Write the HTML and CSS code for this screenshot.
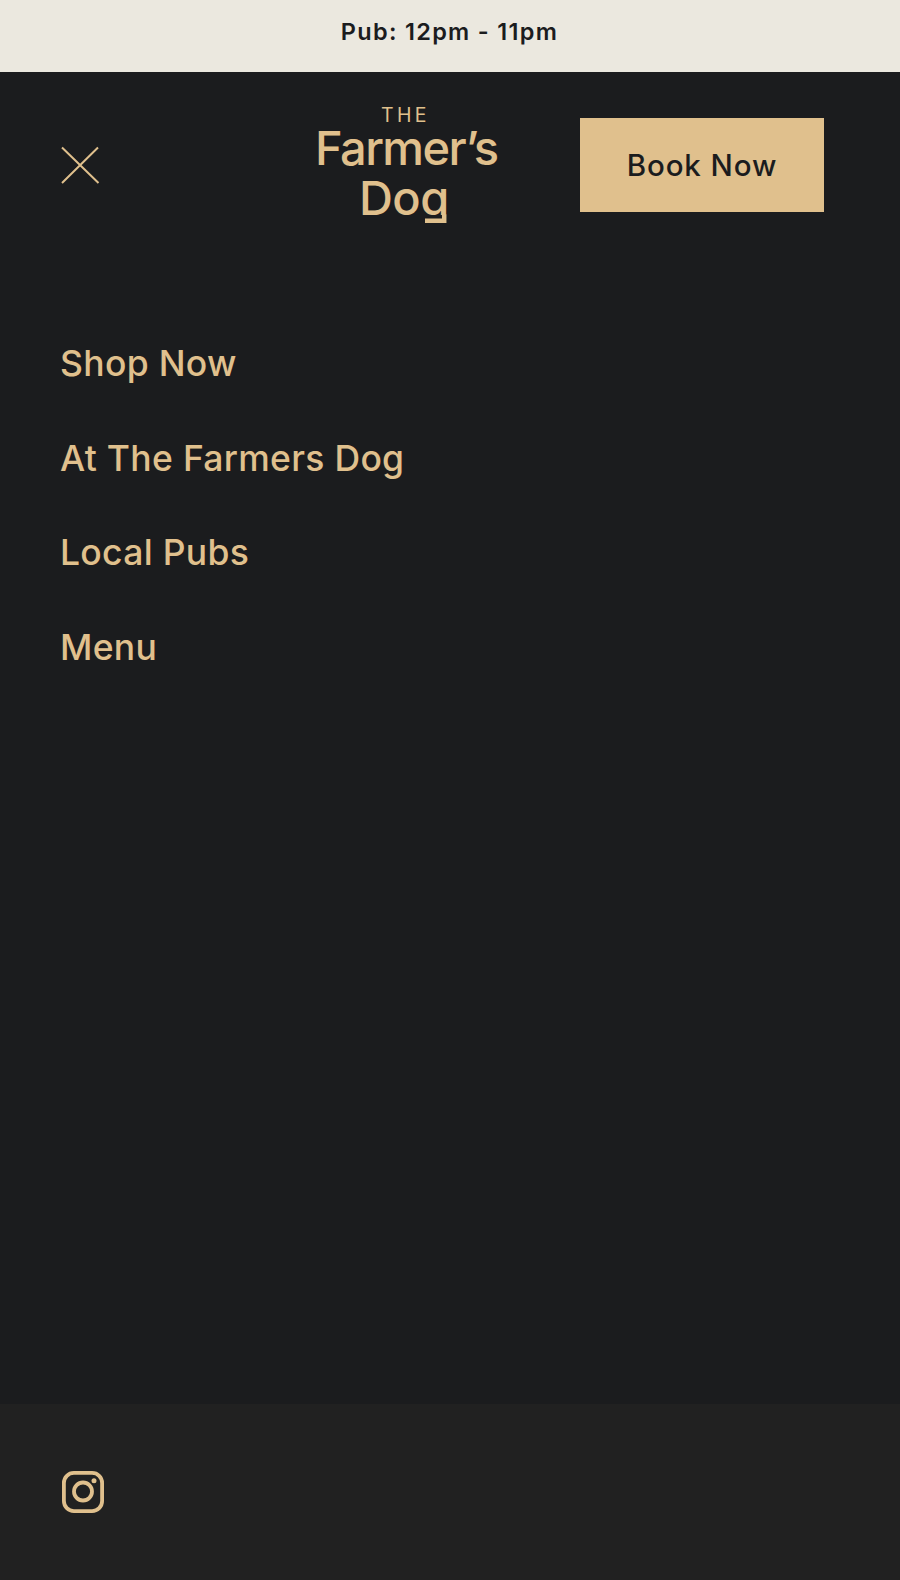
FILE: index.html
```html
<!DOCTYPE html>
<html lang="en">
<head>
    <meta charset="UTF-8">
    <meta name="viewport" content="width=device-width, initial-scale=1.0">
    <title>The Farmer's Dog</title>
    <link rel="stylesheet" href="styles.css">
</head>
<body>
    <div class="opening-hours">Pub: 12pm - 11pm</div>

    <header class="site-header">
        <button class="menu-close" aria-label="Close menu">
            <svg width="40" height="40" viewBox="0 0 40 40">
                <path d="M2 2.500L38.500 38M38 2.500L2 38" fill="none" stroke="currentColor" stroke-width="2"/>
            </svg>
        </button>
        <a class="logo" href="#" aria-label="The Farmer's Dog">
            <svg width="190" height="132" viewBox="0 0 190 132">
                <clipPath id="dog-clip">
                    <rect x="0" y="70" width="190" height="46"/>
                </clipPath>
                <text class="logo-small" x="64" y="22.500" textLength="45.500">THE</text>
                <text class="logo-large" x="-2" y="65.500" textLength="184">Farmer’s</text>
                <text class="logo-large" x="42" y="115.500" textLength="90.300" clip-path="url(#dog-clip)">Dog</text>
                <!-- squared tail of the g -->
                <path d="M108 121.700H127.200V115.500" fill="none" stroke="currentColor" stroke-width="4.500"/>
            </svg>
        </a>
        <a class="book-button" href="#">Book Now</a>
    </header>

    <nav class="main-nav">
        <a href="#">Shop Now</a>
        <a href="#">At The Farmers Dog</a>
        <a href="#">Local Pubs</a>
        <a href="#">Menu</a>
    </nav>

    <footer class="site-footer">
        <a href="#" aria-label="Instagram">
            <svg width="42" height="42" viewBox="0 0 42 42">
                <rect x="1.900" y="1.900" width="38.200" height="38.200" rx="10" fill="none" stroke="currentColor" stroke-width="3.800"/>
                <circle cx="21" cy="20.500" r="9" fill="none" stroke="currentColor" stroke-width="3.800"/>
                <circle cx="32" cy="9.800" r="2.500" fill="currentColor"/>
            </svg>
        </a>
    </footer>
</body>
</html>
```
FILE: styles.css
```css
body {
    font-family: Inter, sans-serif;
    margin: 0;
    min-height: 100vh;
    display: flex;
    flex-direction: column;
    background: #1b1c1e;
    color: #e0c08d;
}

a {
    color: inherit;
    text-decoration: none;
}

svg {
    display: block;
}

.opening-hours {
    box-sizing: border-box;
    height: 72px;
    padding: 16px 1px 0 0;
    background: #ebe8df;
    color: #1b1c1e;
    text-align: center;
    font-size: 23.500px;
    line-height: 32px;
    font-weight: 600;
    letter-spacing: 1.3px;
}

.site-header {
    height: 186px;
    display: grid;
    grid-template-columns: 257px 263px 244px;
    align-items: center;
    padding-left: 60px;
}

.menu-close {
    width: 40px;
    padding: 0;
    border: none;
    background: none;
    color: inherit;
    cursor: pointer;
}

.logo svg {
    overflow: visible;
}
.logo-small,
.logo-large {
    fill: currentColor;
}
.logo-small {
    font-size: 19.500px;
}
.logo-large {
    font-size: 47px;
    font-weight: 500;
}

.book-button {
    height: 94px;
    background: #e0c08d;
    color: #1b1c1e;
    text-align: center;
    font-size: 29.500px;
    line-height: 94px;
    font-weight: 500;
    letter-spacing: 0.9px;
}

.main-nav {
    flex: 1;
    padding: 59px 60px 0;
    font-size: 35.500px;
    line-height: 94.700px;
    font-weight: 500;
    letter-spacing: 0.3px;
}
.main-nav a {
    display: block;
}

.site-footer {
    box-sizing: border-box;
    height: 176px;
    padding: 67px 62px 0;
    background: #212121;
}
```
